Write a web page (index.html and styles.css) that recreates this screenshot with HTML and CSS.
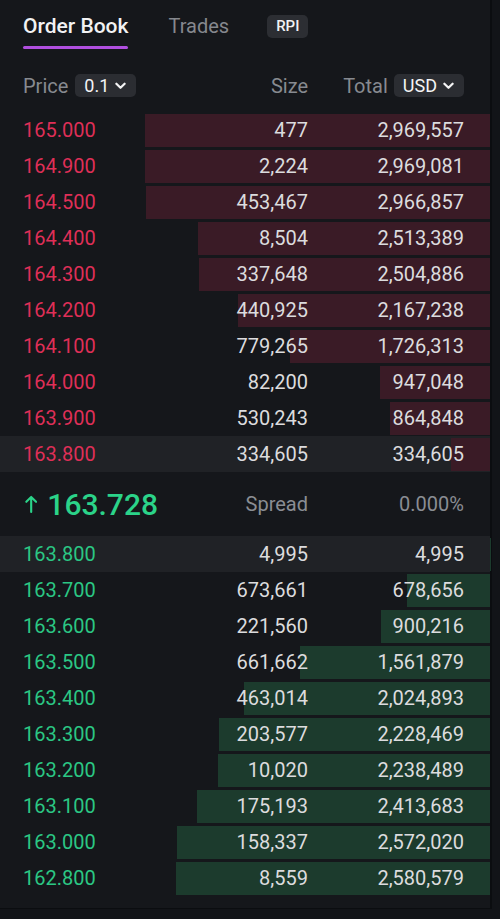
FILE: index.html
```html
<!DOCTYPE html>
<html lang="en">
<head>
    <meta charset="UTF-8">
    <meta name="viewport" content="width=device-width, initial-scale=1.0">
    <title>Order Book</title>
    <link rel="stylesheet" href="styles.css">
</head>
<body>
    <div class="panel">
        <div class="tabs">
            <div class="tab active">Order Book</div>
            <div class="tab">Trades</div>
            <div class="badge">RPI</div>
        </div>

        <div class="head">
            <div class="col-price">
                <span>Price</span>
                <span class="select">0.1
                    <svg class="chev" viewBox="0 0 12 8"><polyline points="1.5,1.5 6,6 10.5,1.5"/></svg>
                </span>
            </div>
            <div class="col-size">Size</div>
            <div class="col-total">
                <span>Total</span>
                <span class="select">USD
                    <svg class="chev" viewBox="0 0 12 8"><polyline points="1.5,1.5 6,6 10.5,1.5"/></svg>
                </span>
            </div>
        </div>

        <!-- asks -->
        <div class="book asks">
            <div class="row"><div class="bar" style="width: 70.4%"></div><span class="price">165.000</span><span class="num">477</span><span class="num">2,969,557</span></div>
            <div class="row"><div class="bar" style="width: 70.4%"></div><span class="price">164.900</span><span class="num">2,224</span><span class="num">2,969,081</span></div>
            <div class="row"><div class="bar" style="width: 70.3%"></div><span class="price">164.500</span><span class="num">453,467</span><span class="num">2,966,857</span></div>
            <div class="row"><div class="bar" style="width: 59.6%"></div><span class="price">164.400</span><span class="num">8,504</span><span class="num">2,513,389</span></div>
            <div class="row"><div class="bar" style="width: 59.4%"></div><span class="price">164.300</span><span class="num">337,648</span><span class="num">2,504,886</span></div>
            <div class="row"><div class="bar" style="width: 51.4%"></div><span class="price">164.200</span><span class="num">440,925</span><span class="num">2,167,238</span></div>
            <div class="row"><div class="bar" style="width: 40.9%"></div><span class="price">164.100</span><span class="num">779,265</span><span class="num">1,726,313</span></div>
            <div class="row"><div class="bar" style="width: 22.4%"></div><span class="price">164.000</span><span class="num">82,200</span><span class="num">947,048</span></div>
            <div class="row"><div class="bar" style="width: 20.5%"></div><span class="price">163.900</span><span class="num">530,243</span><span class="num">864,848</span></div>
            <div class="row best"><div class="bar" style="width: 7.9%"></div><span class="price">163.800</span><span class="num">334,605</span><span class="num">334,605</span></div>
        </div>

        <div class="spread">
            <div class="last">
                <svg class="arrow" viewBox="0 0 14 20"><path d="M7 19V2M1.5 7.5L7 2l5.5 5.5"/></svg>
                <span>163.728</span>
            </div>
            <div class="col-size muted">Spread</div>
            <div class="col-total muted">0.000%</div>
        </div>

        <!-- bids -->
        <div class="book bids">
            <div class="row best"><div class="bar" style="width: 0.1%"></div><span class="price">163.800</span><span class="num">4,995</span><span class="num">4,995</span></div>
            <div class="row"><div class="bar" style="width: 16.9%"></div><span class="price">163.700</span><span class="num">673,661</span><span class="num">678,656</span></div>
            <div class="row"><div class="bar" style="width: 22.3%"></div><span class="price">163.600</span><span class="num">221,560</span><span class="num">900,216</span></div>
            <div class="row"><div class="bar" style="width: 38.8%"></div><span class="price">163.500</span><span class="num">661,662</span><span class="num">1,561,879</span></div>
            <div class="row"><div class="bar" style="width: 50.2%"></div><span class="price">163.400</span><span class="num">463,014</span><span class="num">2,024,893</span></div>
            <div class="row"><div class="bar" style="width: 55.3%"></div><span class="price">163.300</span><span class="num">203,577</span><span class="num">2,228,469</span></div>
            <div class="row"><div class="bar" style="width: 55.6%"></div><span class="price">163.200</span><span class="num">10,020</span><span class="num">2,238,489</span></div>
            <div class="row"><div class="bar" style="width: 59.9%"></div><span class="price">163.100</span><span class="num">175,193</span><span class="num">2,413,683</span></div>
            <div class="row"><div class="bar" style="width: 63.9%"></div><span class="price">163.000</span><span class="num">158,337</span><span class="num">2,572,020</span></div>
            <div class="row"><div class="bar" style="width: 64.1%"></div><span class="price">162.800</span><span class="num">8,559</span><span class="num">2,580,579</span></div>
        </div>
    </div>
</body>
</html>
```

FILE: styles.css
```css
body {
    margin: 0;
    background: #121418;
    font-family: Roboto, "Noto Sans", sans-serif;
    color: #dcdcde;
}

.panel {
    width: 490px;
    height: 908px;
    background: #15171b;
    border-right: 2px solid #0b0d10;
    border-bottom: 1px solid #0b0d10;
}

/* tabs */
.tabs {
    display: flex;
    align-items: flex-start;
    padding: 12px 0 0 23px;
    height: 37px;
}

.tab {
    font-size: 20px;
    line-height: 28px;
    color: #85888e;
    margin-right: 40px;
}

.tab.active {
    font-size: 21px;
    color: #f2f2f3;
    font-weight: 500;
}

.tab.active::after {
    content: "";
    display: block;
    height: 3px;
    margin-top: 6px;
    border-radius: 2px;
    background: #b04fdf;
}

.tab + .tab {
    margin-right: 38px;
}

.badge {
    margin-top: 3px;
    padding: 0 9px;
    height: 23px;
    line-height: 23px;
    font-size: 15px;
    font-weight: 500;
    color: #f2f2f3;
    background: #2c2e33;
    border-radius: 5px;
}

/* column header */
.head,
.row,
.spread {
    display: grid;
    grid-template-columns: 135px 150px 156px;
    padding: 0 26px 0 23px;
    align-items: center;
}

.head {
    height: 53px;
    padding-top: 10px;
    font-size: 20px;
    color: #878a90;
}

.col-price {
    display: flex;
    align-items: center;
    gap: 7px;
}

.col-size {
    text-align: right;
}

.col-total {
    display: flex;
    align-items: center;
    justify-content: flex-end;
    gap: 6px;
}

.select {
    display: inline-flex;
    align-items: center;
    gap: 6px;
    height: 23px;
    padding: 0 10px 0 9px;
    border-radius: 5px;
    background: #2b2d32;
    color: #f4f4f5;
    font-size: 18px;
}

.chev {
    width: 11px;
    height: 8px;
    fill: none;
    stroke: #f4f4f5;
    stroke-width: 2.4;
    stroke-linecap: round;
    stroke-linejoin: round;
}

/* rows */
.row {
    position: relative;
    height: 36px;
    font-size: 20px;
}

.row span {
    position: relative;
}

.row .num {
    text-align: right;
}

.row.best {
    background: #202226;
}

.bar {
    position: absolute;
    right: 0;
    top: 2px;
    bottom: 1px;
}

.asks .price {
    color: #df2f57;
}

.asks .bar {
    background: #3a1b26;
}

.bids .price {
    color: #2bc784;
}

.bids .bar {
    background: #1c3b2d;
}

/* spread */
.spread {
    height: 64px;
    font-size: 20px;
}

.last {
    display: flex;
    align-items: center;
    gap: 10px;
    padding-left: 2px;
    color: #2bd389;
    font-size: 30px;
    font-weight: 500;
}

.arrow {
    width: 15px;
    height: 22px;
    fill: none;
    stroke: #2bd389;
    stroke-width: 2.4;
    stroke-linecap: round;
    stroke-linejoin: round;
}

.muted {
    color: #8a8d93;
}
```
